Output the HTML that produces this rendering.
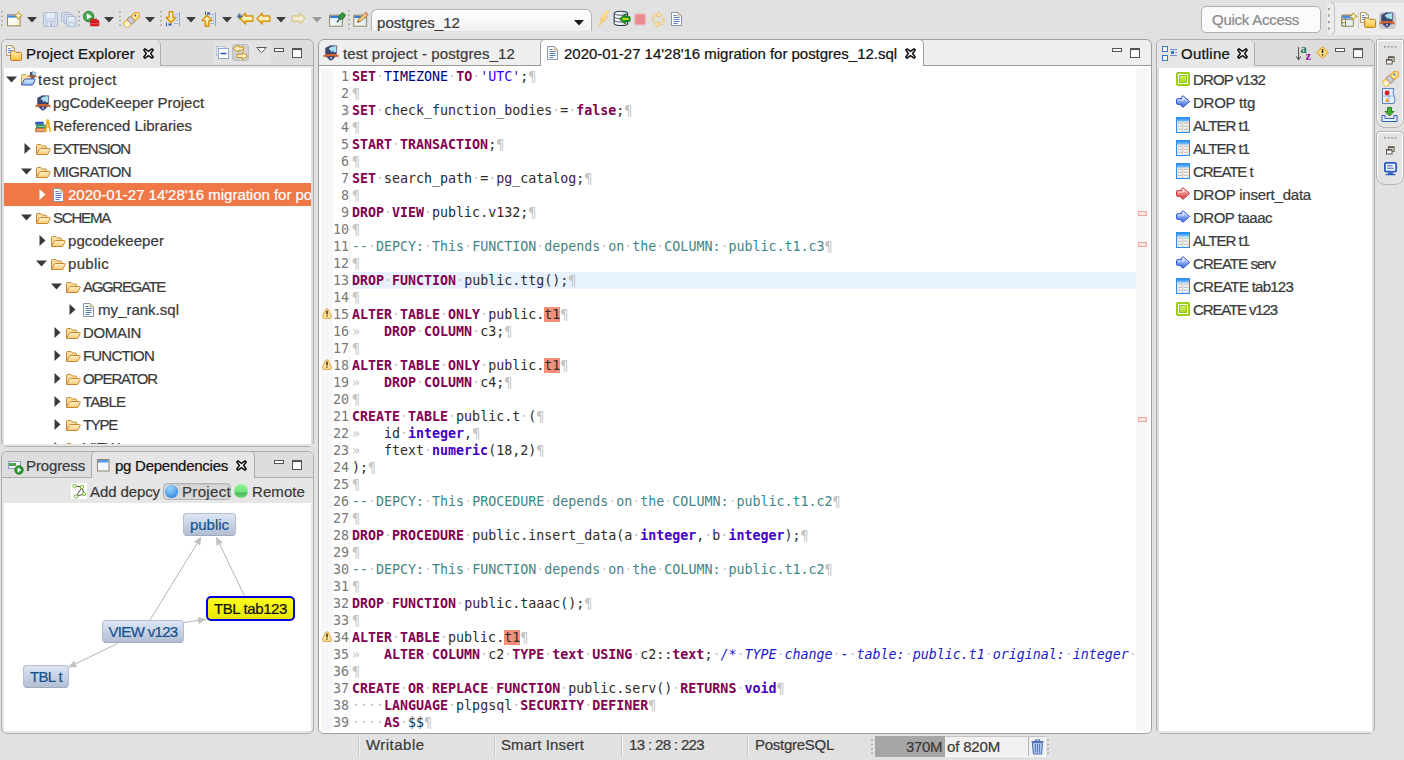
<!DOCTYPE html>
<html lang="en"><head><meta charset="utf-8"><title>Eclipse - pgCodeKeeper</title>
<style>
*{box-sizing:border-box;margin:0;padding:0}
html,body{width:1404px;height:760px;overflow:hidden;background:#e1e1e1}
body{position:relative;font-family:"Liberation Sans",sans-serif;font-size:15px;color:#333;}
.t{position:absolute;white-space:pre;line-height:20px;height:20px;font-size:15px;color:#3a3a3a;-webkit-text-stroke:0.22px currentColor}
.t.blk{color:#111}
.t.wht{color:#fff}
.panel{position:absolute;border:1px solid #a9a9a9;border-radius:12px 12px 9px 9px;background:#e6e6e6;overflow:hidden}
.white{position:absolute;background:#fff}
.code{position:absolute;left:352px;white-space:pre;font-family:"DejaVu Sans Mono","Liberation Mono",monospace;font-size:13.33px;letter-spacing:-0.018px;line-height:17px;height:17px;color:#2c2c2c}
.ln{position:absolute;left:318px;width:31px;text-align:right;white-space:pre;font-family:"DejaVu Sans Mono","Liberation Mono",monospace;font-size:13.33px;letter-spacing:-0.018px;line-height:17px;height:17px;color:#787878}
.k{color:#7f0055;font-weight:bold}
.ty{color:#4000c8;font-weight:bold}
.nv{color:#000080}
.s{color:#2a00ff}
.c{color:#3d878b}
.mc{color:#1a1ad2;font-style:italic}
.w{color:#c4c4c4}
.wc{color:#bcd4d8}
.wm{color:#c4c4ee}
.hl{background:#f5907a}
</style></head>
<body>
<svg width="0" height="0" style="position:absolute"><defs><linearGradient id="ga" x1="0" y1="0" x2="0" y2="1"><stop offset="0" stop-color="#fffdf0"/><stop offset="0.5" stop-color="#fff2b8"/><stop offset="1" stop-color="#fbd45a"/></linearGradient><linearGradient id="gf" x1="0" y1="0" x2="0" y2="1"><stop offset="0" stop-color="#fff2cc"/><stop offset="1" stop-color="#f5cb74"/></linearGradient><linearGradient id="gpf" x1="0" y1="0" x2="0" y2="1"><stop offset="0" stop-color="#d8ecff"/><stop offset="1" stop-color="#8cc0f4"/></linearGradient><linearGradient id="gv" x1="0" y1="0" x2="0" y2="1"><stop offset="0" stop-color="#d4f07a"/><stop offset="1" stop-color="#a6d620"/></linearGradient><linearGradient id="gb2" x1="0" y1="0" x2="0" y2="1"><stop offset="0" stop-color="#dce8ff"/><stop offset="0.45" stop-color="#8fb0f8"/><stop offset="1" stop-color="#3c5fdc"/></linearGradient><linearGradient id="gr" x1="0" y1="0" x2="0" y2="1"><stop offset="0" stop-color="#ffe0e0"/><stop offset="0.45" stop-color="#f08888"/><stop offset="1" stop-color="#d04040"/></linearGradient><linearGradient id="gt" x1="0" y1="0" x2="0" y2="1"><stop offset="0" stop-color="#2a8cf0"/><stop offset="1" stop-color="#8cc8ff"/></linearGradient><linearGradient id="gfo" x1="0" y1="0" x2="0" y2="1"><stop offset="0" stop-color="#ffeeb0"/><stop offset="1" stop-color="#f9c03a"/></linearGradient><linearGradient id="gw" x1="1" y1="0" x2="0" y2="1"><stop offset="0" stop-color="#c4e2fa"/><stop offset="1" stop-color="#ffffff"/></linearGradient><linearGradient id="gn" x1="0" y1="0" x2="1" y2="1"><stop offset="0" stop-color="#ffffff"/><stop offset="0.6" stop-color="#fffdf0"/><stop offset="1" stop-color="#fae9a8"/></linearGradient><linearGradient id="gl" x1="0" y1="0" x2="0" y2="1"><stop offset="0" stop-color="#fde9a0"/><stop offset="1" stop-color="#f8c868"/></linearGradient><linearGradient id="gdb" x1="0" y1="0" x2="1" y2="0"><stop offset="0" stop-color="#ffffff"/><stop offset="0.6" stop-color="#e8ecf0"/><stop offset="1" stop-color="#aab4c0"/></linearGradient><linearGradient id="gpt" x1="0" y1="0" x2="0" y2="1"><stop offset="0" stop-color="#fbd850"/><stop offset="0.55" stop-color="#fffef4"/><stop offset="1" stop-color="#fde890"/></linearGradient><linearGradient id="gpn" x1="0" y1="0" x2="0" y2="1"><stop offset="0" stop-color="#f9c040"/><stop offset="0.5" stop-color="#fff0a8"/><stop offset="1" stop-color="#f8c848"/></linearGradient><radialGradient id="grun" cx="0.45" cy="0.4" r="0.7"><stop offset="0" stop-color="#6ab86a"/><stop offset="1" stop-color="#2f8f36"/></radialGradient></defs></svg>
<div style="position:absolute;left:1327px;top:3px;width:77px;height:32px;background:#ececec"></div>
<svg style="position:absolute;left:1px;top:11px" width="3" height="22" viewBox="0 0 3 22"><rect x="1" y="1.0" width="1.4" height="1.4" fill="#f4f4f4"/><rect x="0.2" y="0.2" width="1.7" height="1.7" fill="#aca695"/><rect x="1" y="5.4" width="1.4" height="1.4" fill="#f4f4f4"/><rect x="0.2" y="4.6" width="1.7" height="1.7" fill="#aca695"/><rect x="1" y="9.8" width="1.4" height="1.4" fill="#f4f4f4"/><rect x="0.2" y="9.0" width="1.7" height="1.7" fill="#aca695"/><rect x="1" y="14.2" width="1.4" height="1.4" fill="#f4f4f4"/><rect x="0.2" y="13.4" width="1.7" height="1.7" fill="#aca695"/></svg><svg style="position:absolute;left:6px;top:11px" width="17" height="16" viewBox="0 0 17 16"><rect x="1.5" y="3.8" width="12.6" height="11" fill="url(#gn)" stroke="#9a8c68" stroke-width="1.1"/><rect x="2.1" y="4.4" width="11.4" height="2.2" fill="#3a86dc"/><path d="M12.4 0.6L13.6 3.4L16.4 4.6L13.6 5.8L12.4 8.6L11.2 5.8L8.4 4.6L11.2 3.4Z" fill="#fffbe0" stroke="#c9a020" stroke-width="1" stroke-linejoin="round"/></svg><svg style="position:absolute;left:27px;top:17px" width="10" height="6" viewBox="0 0 10 6"><path d="M0 0H10L5 5.5Z" fill="#3c3c3c"/></svg><svg style="position:absolute;left:43px;top:12px" width="15" height="15" viewBox="0 0 15 15"><path d="M0.5 1.5Q0.5 0.5 1.5 0.5H13.5Q14.5 0.5 14.5 1.5V13.5Q14.5 14.5 13.5 14.5H1.5Q0.5 14.5 0.5 13.5Z" fill="#d3dceb" stroke="#a9b8d4"/><rect x="3" y="0.8" width="9" height="6" fill="#e9eef6" stroke="#b7c4db" stroke-width="0.6"/><rect x="4" y="9.5" width="7" height="5" fill="#e3e9f3" stroke="#a9b8d4" stroke-width="0.7"/><rect x="7.5" y="11" width="1.5" height="3" fill="#93a4c4"/></svg><svg style="position:absolute;left:61px;top:12px" width="16" height="15" viewBox="0 0 16 15"><rect x="0.5" y="0.5" width="9" height="9" rx="1" fill="#d8e0ed" stroke="#a9b8d4"/><rect x="3" y="2.5" width="9" height="9" rx="1" fill="#d8e0ed" stroke="#a9b8d4"/><rect x="5.5" y="4.5" width="9.5" height="10" rx="1" fill="#d3dceb" stroke="#a9b8d4"/><rect x="7.5" y="5" width="5.5" height="3.5" fill="#e9eef6"/><rect x="8" y="11" width="5" height="3.5" fill="#e3e9f3" stroke="#a9b8d4" stroke-width="0.6"/></svg><svg style="position:absolute;left:78px;top:11px" width="3" height="22" viewBox="0 0 3 22"><rect x="1" y="1.0" width="1.4" height="1.4" fill="#f4f4f4"/><rect x="0.2" y="0.2" width="1.7" height="1.7" fill="#aca695"/><rect x="1" y="5.4" width="1.4" height="1.4" fill="#f4f4f4"/><rect x="0.2" y="4.6" width="1.7" height="1.7" fill="#aca695"/><rect x="1" y="9.8" width="1.4" height="1.4" fill="#f4f4f4"/><rect x="0.2" y="9.0" width="1.7" height="1.7" fill="#aca695"/><rect x="1" y="14.2" width="1.4" height="1.4" fill="#f4f4f4"/><rect x="0.2" y="13.4" width="1.7" height="1.7" fill="#aca695"/></svg><svg style="position:absolute;left:82px;top:10px" width="18" height="17" viewBox="0 0 18 17"><circle cx="6.6" cy="6.5" r="5.2" fill="url(#grun)" stroke="#2a8030" stroke-width="0.9"/><path d="M4.9 3.6L9.8 6.5L4.9 9.4Z" fill="#fff"/><path d="M10.4 10.4V9.4H14.6V10.4" fill="none" stroke="#d01818" stroke-width="1.1"/><rect x="8.3" y="10.3" width="8.6" height="5.6" rx="0.9" fill="#e62228" stroke="#c01418" stroke-width="0.7"/><path d="M8.6 12.6H16.6" stroke="#8a0a0e" stroke-width="0.7"/><path d="M8.6 13.4H16.6" stroke="#ff8a8a" stroke-width="0.5"/></svg><svg style="position:absolute;left:104px;top:17px" width="10" height="6" viewBox="0 0 10 6"><path d="M0 0H10L5 5.5Z" fill="#3c3c3c"/></svg><svg style="position:absolute;left:119px;top:11px" width="3" height="22" viewBox="0 0 3 22"><rect x="1" y="1.0" width="1.4" height="1.4" fill="#f4f4f4"/><rect x="0.2" y="0.2" width="1.7" height="1.7" fill="#aca695"/><rect x="1" y="5.4" width="1.4" height="1.4" fill="#f4f4f4"/><rect x="0.2" y="4.6" width="1.7" height="1.7" fill="#aca695"/><rect x="1" y="9.8" width="1.4" height="1.4" fill="#f4f4f4"/><rect x="0.2" y="9.0" width="1.7" height="1.7" fill="#aca695"/><rect x="1" y="14.2" width="1.4" height="1.4" fill="#f4f4f4"/><rect x="0.2" y="13.4" width="1.7" height="1.7" fill="#aca695"/></svg><svg style="position:absolute;left:123px;top:11px" width="18" height="17" viewBox="0 0 18 17"><g transform="translate(9,8.4) rotate(-42) scale(0.92)"><path d="M-10.4 -2.6Q-10.4 -3.5 -9.4 -3.5H-3.5V3.5H-9.4Q-10.4 3.5 -10.4 2.6Z" fill="url(#gpt)" stroke="#e2a228" stroke-width="0.8"/><path d="M1 -3.6H7.4L10.6 0L7.4 3.6H1Z" fill="url(#gpn)" stroke="#e8982a" stroke-width="0.9" stroke-linejoin="round"/><rect x="-4.2" y="-4" width="5.4" height="8" rx="1.8" fill="#cdc6d6" stroke="#9a7c4c" stroke-width="0.9"/><circle cx="5.6" cy="-0.6" r="1" fill="#2a50b0"/></g></svg><svg style="position:absolute;left:145px;top:17px" width="10" height="6" viewBox="0 0 10 6"><path d="M0 0H10L5 5.5Z" fill="#3c3c3c"/></svg><svg style="position:absolute;left:160px;top:11px" width="3" height="22" viewBox="0 0 3 22"><rect x="1" y="1.0" width="1.4" height="1.4" fill="#f4f4f4"/><rect x="0.2" y="0.2" width="1.7" height="1.7" fill="#aca695"/><rect x="1" y="5.4" width="1.4" height="1.4" fill="#f4f4f4"/><rect x="0.2" y="4.6" width="1.7" height="1.7" fill="#aca695"/><rect x="1" y="9.8" width="1.4" height="1.4" fill="#f4f4f4"/><rect x="0.2" y="9.0" width="1.7" height="1.7" fill="#aca695"/><rect x="1" y="14.2" width="1.4" height="1.4" fill="#f4f4f4"/><rect x="0.2" y="13.4" width="1.7" height="1.7" fill="#aca695"/></svg><svg style="position:absolute;left:165px;top:11px" width="17" height="16" viewBox="0 0 17 16"><path d="M4.2 0.8H7.8V6.4H11L6 11.8L1 6.4H4.2Z" fill="url(#ga)" stroke="#d2940e" stroke-width="1.4" stroke-linejoin="round"/><path d="M1.5 11.5V15.5" stroke="#3a5fae" stroke-width="1"/><rect x="3.5" y="12.5" width="3" height="2" fill="#2d56b0"/><path d="M10 3.5H13M10 6.5H13M11 9.5H13M9 12.5H13" stroke="#9db5dd" stroke-width="1"/><path d="M14.5 1V15" stroke="#8aa3d0" stroke-width="1"/></svg><svg style="position:absolute;left:186px;top:17px" width="10" height="6" viewBox="0 0 10 6"><path d="M0 0H10L5 5.5Z" fill="#3c3c3c"/></svg><svg style="position:absolute;left:201px;top:11px" width="17" height="16" viewBox="0 0 17 16"><path d="M4.2 15.2H7.8V9.6H11L6 4.2L1 9.6H4.2Z" fill="url(#ga)" stroke="#d2940e" stroke-width="1.4" stroke-linejoin="round"/><path d="M4.5 0.5V4" stroke="#3a5fae" stroke-width="1"/><rect x="6" y="1.5" width="3" height="2" fill="#2d56b0"/><path d="M10 3.5H13M10 6.5H13M11 9.5H13M9 12.5H13" stroke="#9db5dd" stroke-width="1"/><path d="M14.5 1V15" stroke="#8aa3d0" stroke-width="1"/></svg><svg style="position:absolute;left:222px;top:17px" width="10" height="6" viewBox="0 0 10 6"><path d="M0 0H10L5 5.5Z" fill="#3c3c3c"/></svg><svg style="position:absolute;left:236px;top:11px" width="18" height="16" viewBox="0 0 18 16"><path d="M9.5 2.2L4.2 7.6L9.5 13V10.2H16.8V5H9.5Z" fill="url(#ga)" stroke="#d2940e" stroke-width="1.4" stroke-linejoin="round"/><path d="M1.6 3.3L5.6 7.3M5.6 3.3L1.6 7.3M3.6 2.4V8.2M0.8 5.3H6.4" stroke="#3a5a9a" stroke-width="0.9"/></svg><svg style="position:absolute;left:256px;top:12px" width="15" height="14" viewBox="0 0 15 14"><path d="M6.3 1.2L1 6.6L6.3 12V9.2H13.8V4H6.3Z" fill="url(#ga)" stroke="#d2940e" stroke-width="1.4" stroke-linejoin="round"/></svg><svg style="position:absolute;left:276px;top:17px" width="10" height="6" viewBox="0 0 10 6"><path d="M0 0H10L5 5.5Z" fill="#3c3c3c"/></svg><svg style="position:absolute;left:291px;top:12px" width="15" height="14" viewBox="0 0 15 14"><path d="M8.7 1.2L14 6.6L8.7 12V9.2H1.2V4H8.7Z" fill="#f5eed6" stroke="#dcc88e" stroke-width="1.4" stroke-linejoin="round"/></svg><svg style="position:absolute;left:312px;top:17px" width="10" height="6" viewBox="0 0 10 6"><path d="M0 0H10L5 5.5Z" fill="#9c9a96"/></svg><svg style="position:absolute;left:329px;top:11px" width="17" height="16" viewBox="0 0 17 16"><rect x="0.6" y="4.2" width="12.8" height="11" fill="url(#gw)" stroke="#9a8c68" stroke-width="1.1"/><rect x="1.2" y="4.8" width="11.6" height="2.2" fill="#3a7ad0"/><path d="M9.6 7.4L10.4 4.2L13.6 1.6L16.4 3.8L14.6 7.4L11.6 8.6Z" fill="#2f9a3a" stroke="#1c6a24" stroke-width="0.8" stroke-linejoin="round"/><path d="M10.4 8.2L8 11.4" stroke="#333" stroke-width="1.2"/></svg><svg style="position:absolute;left:348px;top:10px" width="3" height="22" viewBox="0 0 3 22"><rect x="1" y="1.0" width="1.4" height="1.4" fill="#f4f4f4"/><rect x="0.2" y="0.2" width="1.7" height="1.7" fill="#aca695"/><rect x="1" y="5.4" width="1.4" height="1.4" fill="#f4f4f4"/><rect x="0.2" y="4.6" width="1.7" height="1.7" fill="#aca695"/><rect x="1" y="9.8" width="1.4" height="1.4" fill="#f4f4f4"/><rect x="0.2" y="9.0" width="1.7" height="1.7" fill="#aca695"/><rect x="1" y="14.2" width="1.4" height="1.4" fill="#f4f4f4"/><rect x="0.2" y="13.4" width="1.7" height="1.7" fill="#aca695"/><rect x="1" y="18.6" width="1.4" height="1.4" fill="#f4f4f4"/><rect x="0.2" y="17.8" width="1.7" height="1.7" fill="#aca695"/></svg><svg style="position:absolute;left:353px;top:11px" width="17" height="16" viewBox="0 0 17 16"><rect x="0.8" y="4.2" width="12.8" height="11" fill="url(#gw)" stroke="#9a8c68" stroke-width="1.1"/><rect x="1.4" y="4.8" width="11.6" height="2.2" fill="#3a7ad0"/><path d="M4.6 11.4L5.6 8.2L12.8 1.2L15.2 3.4L7.8 10.4Z" fill="#f6c878" stroke="#b8782a" stroke-width="0.9" stroke-linejoin="round"/><path d="M12.2 1.8L14.6 4" stroke="#e88a8a" stroke-width="1.8"/><path d="M4.6 11.4L5.2 9.6L6.4 10.8Z" fill="#333"/></svg><svg style="position:absolute;left:597px;top:10px" width="14" height="18" viewBox="0 0 14 18"><path d="M8.2 1.2L12.6 0.8L7.6 7.6L10.6 7.2L1.4 17L5.2 9.6L2.6 10Z" fill="url(#gl)" stroke="#f0c060" stroke-width="0.6" stroke-linejoin="round"/></svg><svg style="position:absolute;left:613px;top:10px" width="18" height="17" viewBox="0 0 18 17"><path d="M1.2 3.4C1.2 0.6 14.6 0.6 14.6 3.4V13.4C14.6 16.2 1.2 16.2 1.2 13.4Z" fill="url(#gdb)" stroke="#2c3a50" stroke-width="1.1"/><path d="M1.2 3.4C1.2 5.8 14.6 5.8 14.6 3.4M1.2 6.8C1.2 9.2 14.6 9.2 14.6 6.8M1.2 10.2C1.2 12.6 14.6 12.6 14.6 10.2" fill="none" stroke="#3c4a60" stroke-width="0.9"/><path d="M12.2 4.2L6.6 9L12.2 13.8V11.2H17V6.8H12.2Z" fill="#22a022" stroke="#0e6a12" stroke-width="0.9" stroke-linejoin="round"/><path d="M11 7.8L9 9L11 10.2V9.8H15.6V8.2H11Z" fill="#e8f020"/></svg><svg style="position:absolute;left:634px;top:13px" width="12" height="13" viewBox="0 0 12 13"><rect x="1" y="1.2" width="10.2" height="10.4" rx="1.6" fill="#ec8a92" stroke="#f0a8ae" stroke-width="1.4"/></svg><svg style="position:absolute;left:650px;top:11px" width="16" height="17" viewBox="0 0 16 17"><path d="M2.2 9.6C0.6 5.6 3.8 2.2 7.8 3L8.4 0.8L12.4 4.6L7.2 6.4L7.6 4.6C5.2 4.4 3.2 6.4 4.2 9.2Z" fill="#f6e2b0" stroke="#e2c27a" stroke-width="0.8" stroke-linejoin="round"/><path d="M13.8 7.4C15.4 11.4 12.2 14.8 8.2 14L7.6 16.2L3.6 12.4L8.8 10.6L8.4 12.4C10.8 12.6 12.8 10.6 11.8 7.8Z" fill="#f6e2b0" stroke="#e2c27a" stroke-width="0.8" stroke-linejoin="round"/></svg><svg style="position:absolute;left:671px;top:12px" width="11" height="14" viewBox="0 0 11 14"><path d="M0.5 0.5H7L10.5 4V13.5H0.5Z" fill="#fcfdff" stroke="#8794ad"/><path d="M7 0.5V4H10.5Z" fill="#f3e6b4" stroke="#b9a97a" stroke-width="0.8" stroke-linejoin="round"/><path d="M2.5 3.5H5.5M2.5 5.5H8.5M2.5 7.5H8.5M2.5 9.5H8.5M2.5 11.5H6.5" stroke="#5878b8" stroke-width="1"/></svg><svg style="position:absolute;left:1328px;top:8px" width="3" height="24" viewBox="0 0 3 24"><rect x="1" y="1.0" width="1.6" height="1.8" fill="#f8f8f8"/><rect x="0" y="0.0" width="2" height="2.2" fill="#a59f8e"/><rect x="1" y="7.5" width="1.6" height="1.8" fill="#f8f8f8"/><rect x="0" y="6.5" width="2" height="2.2" fill="#a59f8e"/><rect x="1" y="14.0" width="1.6" height="1.8" fill="#f8f8f8"/><rect x="0" y="13.0" width="2" height="2.2" fill="#a59f8e"/><rect x="1" y="20.5" width="1.6" height="1.8" fill="#f8f8f8"/><rect x="0" y="19.5" width="2" height="2.2" fill="#a59f8e"/></svg><svg style="position:absolute;left:1331px;top:2px" width="5" height="34" viewBox="0 0 5 34"><path d="M0 0.5Q3.5 0.5 3.5 4V29Q3.5 32.5 0 32.5" fill="none" stroke="#c2c2c2"/></svg><svg style="position:absolute;left:1341px;top:12px" width="17" height="16" viewBox="0 0 17 16"><rect x="0.8" y="3.2" width="11.4" height="11" rx="1" fill="#f4faff" stroke="#8f7d4a" stroke-width="1.2"/><path d="M0.8 7.2H12.2M4.6 3.2V14.2M0.8 10.8H4.6" stroke="#8f7d4a" stroke-width="1.1"/><rect x="1.4" y="3.8" width="10.2" height="2.6" fill="#4a8adc"/><path d="M5.4 8H11.6V13.6H5.4Z" fill="#e2f0fc"/><path d="M12.4 0.6L13.6 3.2L16.2 4.4L13.6 5.6L12.4 8.2L11.2 5.6L8.6 4.4L11.2 3.2Z" fill="#fffbe0" stroke="#c49a1e" stroke-width="1"/></svg><svg style="position:absolute;left:1358px;top:11px" width="1" height="18" viewBox="0 0 1 18"><path d="M0.5 0V18" stroke="#d6d6d6"/></svg><svg style="position:absolute;left:1360px;top:12px" width="17" height="16" viewBox="0 0 17 16"><path d="M0.6 0.6H6L8.4 3V10.4H0.6Z" fill="#fdfdfd" stroke="#a89868" stroke-width="1"/><path d="M6 0.6V3H8.4" fill="#e8d8a0" stroke="#a89868" stroke-width="0.8"/><path d="M2 3.5H4.5M2 5.5H6.5M2 7.5H5" stroke="#5a82d8" stroke-width="1"/><path d="M4.6 14.4V7Q4.6 6 5.6 6H8.2Q8.8 6 9.2 6.6L9.8 7.4H14.6Q15.6 7.4 15.6 8.4V14.4Q15.6 15.4 14.6 15.4H5.6Q4.6 15.4 4.6 14.4Z" fill="url(#gfo)" stroke="#c07a1e" stroke-width="1"/></svg><div style="position:absolute;left:1379px;top:12px;width:17px;height:17px;background:#c9c9ce;border-radius:4px"></div><svg style="position:absolute;left:1379px;top:12px" width="17" height="16" viewBox="0 0 17 16"><path d="M2.4 3L7.5 0.4L13.8 0.7L13.4 9.7C12.5 12.5 9.5 14.5 7.9 15.6C6.3 14.5 3.2 12.5 2.4 9.7Z" fill="#3b4670" stroke="#59648a" stroke-width="0.5"/><path d="M5.6 4.2C6.6 1.8 9 1 13.2 1.2L13 7L10.8 7.6L10 5.4L8.4 7.2L7.2 4.8Z" fill="#a6e2f0"/><path d="M0.2 10.2C4 8.5 12 8.5 15.8 10.2L15.2 11.2L15.8 12.4C12 10.8 4 10.8 0.2 12.4L0.8 11.2Z" fill="#d4622c"/><path d="M7.2 12.2H8.8V13.8H7.2Z" fill="#dfe6f2"/></svg>
<div style="position:absolute;left:371px;top:9px;width:221px;height:22px;border:1px solid #b4b4b4;border-bottom:none;border-radius:6px 6px 0 0;background:linear-gradient(#fff,#f1f1f1)"></div>
<span class="t" style="left:377px;top:13px;letter-spacing:0.040px;">postgres_12</span>
<svg style="position:absolute;left:574px;top:20px" width="11" height="6" viewBox="0 0 11 6"><path d="M0 0H10L5 5.5Z" fill="#1a1a1a"/></svg>
<div style="position:absolute;left:1201px;top:6px;width:120px;height:27px;border:1px solid #b0b0b0;border-radius:5px;background:#fbfbfb"></div>
<span class="t" style="left:1212px;top:10px;letter-spacing:-0.252px;color:#8a8a8a;">Quick Access</span>
<div style="position:absolute;left:1px;top:39px;width:313px;height:408px;border:1px solid #aeaeae;border-radius:6px;background:#dddddd"></div>
<div style="position:absolute;left:2px;top:65px;width:311px;height:1px;background:#aeaeae"></div>
<div style="position:absolute;left:2px;top:66px;width:311px;height:2px;background:linear-gradient(#e6e6e6,#ececec)"></div>
<div style="position:absolute;left:4px;top:68px;width:307px;height:376px;background:#fff;overflow:hidden"><svg style="position:absolute;left:2px;top:8px" width="11" height="7" viewBox="0 0 11 7"><path d="M0 0.5H11L5.5 6.5Z" fill="#3a3a3a"/></svg><svg style="position:absolute;left:16px;top:3px" width="17" height="16" viewBox="0 0 17 16"><path d="M1.5 13V4.6Q1.5 3.5 2.6 3.5H5.4Q6.3 3.5 6.8 4.3L7.3 5H10.5Q11.5 5 11.5 6V8" fill="#fbe2a2" stroke="#c9a05a" stroke-width="1"/><path d="M1.5 14L4.2 8.7Q4.6 8 5.4 8H14.4Q15.6 8 15.1 9.1L13 13.5Q12.7 14 12 14Z" fill="url(#gpf)" stroke="#3a4eb4" stroke-width="1" stroke-linejoin="round"/><path d="M10 1.2L12.7 0.4L15.4 1.2L15.6 4.6C15.2 6.6 13.6 7.6 12.7 8C11.8 7.6 10.2 6.6 9.8 4.6Z" fill="#4a5478"/><path d="M12.4 1.4C13 0.8 14.8 0.9 15 1.8V4L12.9 4.5C13 3.4 11.8 2.6 12.4 1.4Z" fill="#a9e3f1"/><path d="M8.4 4.9C10.5 4.2 14.9 4.2 17 4.9L16.6 6.3C14.6 5.7 10.8 5.7 8.8 6.3Z" fill="#d9622b"/></svg><span class="t" style="left:34px;top:2px;letter-spacing:0.470px;">test project</span><svg style="position:absolute;left:31px;top:27px" width="17" height="16" viewBox="0 0 17 16"><path d="M2.4 3L7.5 0.4L13.8 0.7L13.4 9.7C12.5 12.5 9.5 14.5 7.9 15.6C6.3 14.5 3.2 12.5 2.4 9.7Z" fill="#3b4670" stroke="#59648a" stroke-width="0.5"/><path d="M5.6 4.2C6.6 1.8 9 1 13.2 1.2L13 7L10.8 7.6L10 5.4L8.4 7.2L7.2 4.8Z" fill="#a6e2f0"/><path d="M0.2 10.2C4 8.5 12 8.5 15.8 10.2L15.2 11.2L15.8 12.4C12 10.8 4 10.8 0.2 12.4L0.8 11.2Z" fill="#d4622c"/><path d="M7.2 12.2H8.8V13.8H7.2Z" fill="#dfe6f2"/></svg><span class="t" style="left:49px;top:25px;letter-spacing:-0.038px;">pgCodeKeeper Project</span><svg style="position:absolute;left:31px;top:50px" width="16" height="16" viewBox="0 0 16 16"><rect x="0.5" y="4" width="8" height="2.6" rx="0.5" fill="#2a62c0" stroke="#1f4a9a" stroke-width="0.5"/><rect x="1.5" y="7" width="9.5" height="3" rx="0.5" fill="#3a9a62" stroke="#1f7a48" stroke-width="0.6"/><path d="M3 8.5H10" stroke="#9fdcb8" stroke-width="0.8"/><rect x="0.5" y="10.4" width="10.5" height="3.4" rx="0.5" fill="#e08a50" stroke="#b85a22" stroke-width="0.7"/><path d="M2 12H10" stroke="#f8c8a0" stroke-width="0.8"/><path d="M10.6 13.8L12.2 2.6Q12.5 1 13.2 2.6L15.4 13.8" fill="none" stroke="#eeb21e" stroke-width="1.8" stroke-linejoin="round"/><path d="M11.6 9H14.4M12 5.8H13.8" stroke="#c98a10" stroke-width="0.8"/></svg><span class="t" style="left:49px;top:48px;letter-spacing:-0.012px;">Referenced Libraries</span><svg style="position:absolute;left:20px;top:75px" width="7" height="11" viewBox="0 0 7 11"><path d="M0.5 0L6.5 5.5L0.5 11Z" fill="#3a3a3a"/></svg><svg style="position:absolute;left:31px;top:73px" width="16" height="16" viewBox="0 0 16 16"><path d="M1.5 13V4.6Q1.5 3.5 2.6 3.5H5.4Q6.3 3.5 6.8 4.3L7.3 5H10.5Q11.5 5 11.5 6V7.5" fill="#fadf9e" stroke="#c8872e" stroke-width="1"/><path d="M1.5 13.5L4.2 8.2Q4.6 7.5 5.4 7.5H14.4Q15.6 7.5 15.1 8.6L13 13Q12.7 13.5 12 13.5Z" fill="url(#gf)" stroke="#c8872e" stroke-width="1" stroke-linejoin="round"/></svg><span class="t" style="left:49px;top:71px;letter-spacing:-1.076px;">EXTENSION</span><svg style="position:absolute;left:17px;top:100px" width="11" height="7" viewBox="0 0 11 7"><path d="M0 0.5H11L5.5 6.5Z" fill="#3a3a3a"/></svg><svg style="position:absolute;left:31px;top:96px" width="16" height="16" viewBox="0 0 16 16"><path d="M1.5 13V4.6Q1.5 3.5 2.6 3.5H5.4Q6.3 3.5 6.8 4.3L7.3 5H10.5Q11.5 5 11.5 6V7.5" fill="#fadf9e" stroke="#c8872e" stroke-width="1"/><path d="M1.5 13.5L4.2 8.2Q4.6 7.5 5.4 7.5H14.4Q15.6 7.5 15.1 8.6L13 13Q12.7 13.5 12 13.5Z" fill="url(#gf)" stroke="#c8872e" stroke-width="1" stroke-linejoin="round"/></svg><span class="t" style="left:49px;top:94px;letter-spacing:-0.654px;">MIGRATION</span><div style="position:absolute;left:0px;top:115px;width:308px;height:23px;background:#f07746"></div><svg style="position:absolute;left:35px;top:121px" width="7" height="11" viewBox="0 0 7 11"><path d="M0.5 0L6.5 5.5L0.5 11Z" fill="#fff"/></svg><svg style="position:absolute;left:49px;top:120px" width="11" height="14" viewBox="0 0 11 14"><path d="M0.5 0.5H7L10.5 4V13.5H0.5Z" fill="#fcfdff" stroke="#8794ad"/><path d="M7 0.5V4H10.5Z" fill="#f3e6b4" stroke="#b9a97a" stroke-width="0.8" stroke-linejoin="round"/><path d="M2.5 3.5H5.5M2.5 5.5H8.5M2.5 7.5H8.5M2.5 9.5H8.5M2.5 11.5H6.5" stroke="#5878b8" stroke-width="1"/></svg><span class="t wht" style="left:64px;top:117px;letter-spacing:-0.026px;">2020-01-27 14'28'16 migration for postgres_12.sql</span><svg style="position:absolute;left:17px;top:146px" width="11" height="7" viewBox="0 0 11 7"><path d="M0 0.5H11L5.5 6.5Z" fill="#3a3a3a"/></svg><svg style="position:absolute;left:31px;top:142px" width="16" height="16" viewBox="0 0 16 16"><path d="M1.5 13V4.6Q1.5 3.5 2.6 3.5H5.4Q6.3 3.5 6.8 4.3L7.3 5H10.5Q11.5 5 11.5 6V7.5" fill="#fadf9e" stroke="#c8872e" stroke-width="1"/><path d="M1.5 13.5L4.2 8.2Q4.6 7.5 5.4 7.5H14.4Q15.6 7.5 15.1 8.6L13 13Q12.7 13.5 12 13.5Z" fill="url(#gf)" stroke="#c8872e" stroke-width="1" stroke-linejoin="round"/></svg><span class="t" style="left:49px;top:140px;letter-spacing:-1.196px;">SCHEMA</span><svg style="position:absolute;left:35px;top:167px" width="7" height="11" viewBox="0 0 7 11"><path d="M0.5 0L6.5 5.5L0.5 11Z" fill="#3a3a3a"/></svg><svg style="position:absolute;left:46px;top:165px" width="16" height="16" viewBox="0 0 16 16"><path d="M1.5 13V4.6Q1.5 3.5 2.6 3.5H5.4Q6.3 3.5 6.8 4.3L7.3 5H10.5Q11.5 5 11.5 6V7.5" fill="#fadf9e" stroke="#c8872e" stroke-width="1"/><path d="M1.5 13.5L4.2 8.2Q4.6 7.5 5.4 7.5H14.4Q15.6 7.5 15.1 8.6L13 13Q12.7 13.5 12 13.5Z" fill="url(#gf)" stroke="#c8872e" stroke-width="1" stroke-linejoin="round"/></svg><span class="t" style="left:64px;top:163px;letter-spacing:0.077px;">pgcodekeeper</span><svg style="position:absolute;left:32px;top:192px" width="11" height="7" viewBox="0 0 11 7"><path d="M0 0.5H11L5.5 6.5Z" fill="#3a3a3a"/></svg><svg style="position:absolute;left:46px;top:188px" width="16" height="16" viewBox="0 0 16 16"><path d="M1.5 13V4.6Q1.5 3.5 2.6 3.5H5.4Q6.3 3.5 6.8 4.3L7.3 5H10.5Q11.5 5 11.5 6V7.5" fill="#fadf9e" stroke="#c8872e" stroke-width="1"/><path d="M1.5 13.5L4.2 8.2Q4.6 7.5 5.4 7.5H14.4Q15.6 7.5 15.1 8.6L13 13Q12.7 13.5 12 13.5Z" fill="url(#gf)" stroke="#c8872e" stroke-width="1" stroke-linejoin="round"/></svg><span class="t" style="left:64px;top:186px;letter-spacing:0.301px;">public</span><svg style="position:absolute;left:47px;top:215px" width="11" height="7" viewBox="0 0 11 7"><path d="M0 0.5H11L5.5 6.5Z" fill="#3a3a3a"/></svg><svg style="position:absolute;left:61px;top:211px" width="16" height="16" viewBox="0 0 16 16"><path d="M1.5 13V4.6Q1.5 3.5 2.6 3.5H5.4Q6.3 3.5 6.8 4.3L7.3 5H10.5Q11.5 5 11.5 6V7.5" fill="#fadf9e" stroke="#c8872e" stroke-width="1"/><path d="M1.5 13.5L4.2 8.2Q4.6 7.5 5.4 7.5H14.4Q15.6 7.5 15.1 8.6L13 13Q12.7 13.5 12 13.5Z" fill="url(#gf)" stroke="#c8872e" stroke-width="1" stroke-linejoin="round"/></svg><span class="t" style="left:79px;top:209px;letter-spacing:-1.323px;">AGGREGATE</span><svg style="position:absolute;left:65px;top:236px" width="7" height="11" viewBox="0 0 7 11"><path d="M0.5 0L6.5 5.5L0.5 11Z" fill="#3a3a3a"/></svg><svg style="position:absolute;left:79px;top:235px" width="11" height="14" viewBox="0 0 11 14"><path d="M0.5 0.5H7L10.5 4V13.5H0.5Z" fill="#fcfdff" stroke="#8794ad"/><path d="M7 0.5V4H10.5Z" fill="#f3e6b4" stroke="#b9a97a" stroke-width="0.8" stroke-linejoin="round"/><path d="M2.5 3.5H5.5M2.5 5.5H8.5M2.5 7.5H8.5M2.5 9.5H8.5M2.5 11.5H6.5" stroke="#5878b8" stroke-width="1"/></svg><span class="t" style="left:94px;top:232px;letter-spacing:0.013px;">my_rank.sql</span><svg style="position:absolute;left:50px;top:259px" width="7" height="11" viewBox="0 0 7 11"><path d="M0.5 0L6.5 5.5L0.5 11Z" fill="#3a3a3a"/></svg><svg style="position:absolute;left:61px;top:257px" width="16" height="16" viewBox="0 0 16 16"><path d="M1.5 13V4.6Q1.5 3.5 2.6 3.5H5.4Q6.3 3.5 6.8 4.3L7.3 5H10.5Q11.5 5 11.5 6V7.5" fill="#fadf9e" stroke="#c8872e" stroke-width="1"/><path d="M1.5 13.5L4.2 8.2Q4.6 7.5 5.4 7.5H14.4Q15.6 7.5 15.1 8.6L13 13Q12.7 13.5 12 13.5Z" fill="url(#gf)" stroke="#c8872e" stroke-width="1" stroke-linejoin="round"/></svg><span class="t" style="left:79px;top:255px;letter-spacing:-0.333px;">DOMAIN</span><svg style="position:absolute;left:50px;top:282px" width="7" height="11" viewBox="0 0 7 11"><path d="M0.5 0L6.5 5.5L0.5 11Z" fill="#3a3a3a"/></svg><svg style="position:absolute;left:61px;top:280px" width="16" height="16" viewBox="0 0 16 16"><path d="M1.5 13V4.6Q1.5 3.5 2.6 3.5H5.4Q6.3 3.5 6.8 4.3L7.3 5H10.5Q11.5 5 11.5 6V7.5" fill="#fadf9e" stroke="#c8872e" stroke-width="1"/><path d="M1.5 13.5L4.2 8.2Q4.6 7.5 5.4 7.5H14.4Q15.6 7.5 15.1 8.6L13 13Q12.7 13.5 12 13.5Z" fill="url(#gf)" stroke="#c8872e" stroke-width="1" stroke-linejoin="round"/></svg><span class="t" style="left:79px;top:278px;letter-spacing:-0.811px;">FUNCTION</span><svg style="position:absolute;left:50px;top:305px" width="7" height="11" viewBox="0 0 7 11"><path d="M0.5 0L6.5 5.5L0.5 11Z" fill="#3a3a3a"/></svg><svg style="position:absolute;left:61px;top:303px" width="16" height="16" viewBox="0 0 16 16"><path d="M1.5 13V4.6Q1.5 3.5 2.6 3.5H5.4Q6.3 3.5 6.8 4.3L7.3 5H10.5Q11.5 5 11.5 6V7.5" fill="#fadf9e" stroke="#c8872e" stroke-width="1"/><path d="M1.5 13.5L4.2 8.2Q4.6 7.5 5.4 7.5H14.4Q15.6 7.5 15.1 8.6L13 13Q12.7 13.5 12 13.5Z" fill="url(#gf)" stroke="#c8872e" stroke-width="1" stroke-linejoin="round"/></svg><span class="t" style="left:79px;top:301px;letter-spacing:-1.099px;">OPERATOR</span><svg style="position:absolute;left:50px;top:328px" width="7" height="11" viewBox="0 0 7 11"><path d="M0.5 0L6.5 5.5L0.5 11Z" fill="#3a3a3a"/></svg><svg style="position:absolute;left:61px;top:326px" width="16" height="16" viewBox="0 0 16 16"><path d="M1.5 13V4.6Q1.5 3.5 2.6 3.5H5.4Q6.3 3.5 6.8 4.3L7.3 5H10.5Q11.5 5 11.5 6V7.5" fill="#fadf9e" stroke="#c8872e" stroke-width="1"/><path d="M1.5 13.5L4.2 8.2Q4.6 7.5 5.4 7.5H14.4Q15.6 7.5 15.1 8.6L13 13Q12.7 13.5 12 13.5Z" fill="url(#gf)" stroke="#c8872e" stroke-width="1" stroke-linejoin="round"/></svg><span class="t" style="left:79px;top:324px;letter-spacing:-0.881px;">TABLE</span><svg style="position:absolute;left:50px;top:351px" width="7" height="11" viewBox="0 0 7 11"><path d="M0.5 0L6.5 5.5L0.5 11Z" fill="#3a3a3a"/></svg><svg style="position:absolute;left:61px;top:349px" width="16" height="16" viewBox="0 0 16 16"><path d="M1.5 13V4.6Q1.5 3.5 2.6 3.5H5.4Q6.3 3.5 6.8 4.3L7.3 5H10.5Q11.5 5 11.5 6V7.5" fill="#fadf9e" stroke="#c8872e" stroke-width="1"/><path d="M1.5 13.5L4.2 8.2Q4.6 7.5 5.4 7.5H14.4Q15.6 7.5 15.1 8.6L13 13Q12.7 13.5 12 13.5Z" fill="url(#gf)" stroke="#c8872e" stroke-width="1" stroke-linejoin="round"/></svg><span class="t" style="left:79px;top:347px;letter-spacing:-1.294px;">TYPE</span><svg style="position:absolute;left:50px;top:374px" width="7" height="11" viewBox="0 0 7 11"><path d="M0.5 0L6.5 5.5L0.5 11Z" fill="#3a3a3a"/></svg><svg style="position:absolute;left:61px;top:372px" width="16" height="16" viewBox="0 0 16 16"><path d="M1.5 13V4.6Q1.5 3.5 2.6 3.5H5.4Q6.3 3.5 6.8 4.3L7.3 5H10.5Q11.5 5 11.5 6V7.5" fill="#fadf9e" stroke="#c8872e" stroke-width="1"/><path d="M1.5 13.5L4.2 8.2Q4.6 7.5 5.4 7.5H14.4Q15.6 7.5 15.1 8.6L13 13Q12.7 13.5 12 13.5Z" fill="url(#gf)" stroke="#c8872e" stroke-width="1" stroke-linejoin="round"/></svg><span class="t" style="left:79px;top:370px;letter-spacing:-0.584px;">VIEW</span></div>
<div style="position:absolute;left:2px;top:444px;width:311px;height:2px;background:#e6e6e6;border-radius:0 0 5px 5px"></div>
<div style="position:absolute;left:2px;top:40px;width:159px;height:26px;background:#e6e6e6;border-right:1px solid #aeaeae;border-top-right-radius:5px;border-top-left-radius:5px;"></div>
<span class="t blk" style="left:26px;top:44px;letter-spacing:0.143px;">Project Explorer</span>
<svg style="position:absolute;left:143px;top:48px" width="11" height="11" viewBox="0 0 11 11"><path d="M2 0.8 L5.5 3.4 L9 0.8 L10.2 2 L7.6 5.5 L10.2 9 L9 10.2 L5.5 7.6 L2 10.2 L0.8 9 L3.4 5.5 L0.8 2 Z" fill="#fff" stroke="#111" stroke-width="1.5" stroke-linejoin="round"/></svg>
<div style="position:absolute;left:213px;top:41px;width:58px;height:23px;background:#e3e3e3"></div><svg style="position:absolute;left:6px;top:45px" width="17" height="16" viewBox="0 0 17 16"><path d="M0.6 0.6H6L8.4 3V10.4H0.6Z" fill="#fdfdfd" stroke="#a89868" stroke-width="1"/><path d="M6 0.6V3H8.4" fill="#e8d8a0" stroke="#a89868" stroke-width="0.8"/><path d="M2 3.5H4.5M2 5.5H6.5M2 7.5H5" stroke="#5a82d8" stroke-width="1"/><path d="M4.6 14.4V7Q4.6 6 5.6 6H8.2Q8.8 6 9.2 6.6L9.8 7.4H14.6Q15.6 7.4 15.6 8.4V14.4Q15.6 15.4 14.6 15.4H5.6Q4.6 15.4 4.6 14.4Z" fill="url(#gfo)" stroke="#c07a1e" stroke-width="1"/></svg><svg style="position:absolute;left:216px;top:46px" width="14" height="13" viewBox="0 0 14 13"><rect x="0.5" y="0.5" width="9" height="9" fill="#eaf0fa" stroke="#b9c6de"/><rect x="2.5" y="2.5" width="10" height="10" fill="#fdfeff" stroke="#8ea5cf"/><path d="M4.5 7.5H10.5" stroke="#1f4f9f" stroke-width="1.4"/></svg><div style="position:absolute;left:232px;top:44px;width:17px;height:17px;border:1px solid #bdbdbd;border-radius:3px;background:#d0d0d0"></div><svg style="position:absolute;left:232px;top:44px" width="17" height="17" viewBox="0 0 17 17"><path d="M6.5 1L1.2 4.6L6.5 8.2V6.2H11.5V3H6.5Z" fill="#fff3c4" stroke="#c9921a" stroke-width="1" stroke-linejoin="round"/><path d="M10.5 8.4L15.8 12L10.5 15.6V13.6H5V10.4H10.5Z" fill="#fff3c4" stroke="#c9921a" stroke-width="1" stroke-linejoin="round"/></svg><svg style="position:absolute;left:256px;top:47px" width="11" height="7" viewBox="0 0 11 7"><path d="M0.7 0.5H10.3L5.5 5.8Z" fill="#fff" stroke="#555" stroke-width="1"/></svg><svg style="position:absolute;left:274px;top:48px" width="10" height="4" viewBox="0 0 10 4"><rect x="0.5" y="0.5" width="9" height="3" fill="#fff" stroke="#555"/></svg><svg style="position:absolute;left:292px;top:48px" width="10" height="10" viewBox="0 0 10 10"><rect x="0.5" y="0.5" width="9" height="9" fill="#fff" stroke="#555"/><rect x="0.5" y="0.5" width="9" height="1.6" fill="#555"/></svg>
<div style="position:absolute;left:1px;top:451px;width:313px;height:283px;border:1px solid #aeaeae;border-radius:6px;background:#e6e6e6"></div>
<div style="position:absolute;left:2px;top:452px;width:90px;height:26px;background:#dddddd;border-radius:5px 0 0 0;border-bottom:1px solid #aeaeae"></div>
<div style="position:absolute;left:254px;top:452px;width:59px;height:26px;background:#dddddd;border-radius:0 5px 0 0;border-bottom:1px solid #aeaeae"></div>
<div style="position:absolute;left:4px;top:503px;width:307px;height:228px;background:#fff;overflow:hidden"><svg style="position:absolute;left:-4px;top:-503px" width="320" height="760" viewBox="0 0 320 760"><g stroke-width="1"><path d="M150.0 620.0L197.0 543.7" fill="none" stroke="#b6b6b6"/><path d="M201.5 536.5L200.1 545.6L194.0 541.8Z" fill="#c2c2c2" stroke="none"/><path d="M245.0 597.0L219.7 544.2" fill="none" stroke="#b6b6b6"/><path d="M216.0 536.5L222.9 542.6L216.4 545.7Z" fill="#c2c2c2" stroke="none"/><path d="M184.0 622.5L198.1 620.4" fill="none" stroke="#b6b6b6"/><path d="M206.5 619.2L198.6 624.0L197.6 616.9Z" fill="#c2c2c2" stroke="none"/><path d="M117.5 643.5L75.6 663.8" fill="none" stroke="#b6b6b6"/><path d="M68.0 667.5L74.1 660.6L77.2 667.0Z" fill="#c2c2c2" stroke="none"/></g></svg><div style="position:absolute;left:179px;top:10px;width:53px;height:23px;border:1px solid #b6becd;border-bottom-color:#a2abbd;border-radius:4px;background:linear-gradient(#dce7f6,#b2bed2);"></div><span class="t" style="left:186.0px;top:11.5px;letter-spacing:-0.032px;color:#17508f;">public</span><div style="position:absolute;left:202px;top:93px;width:89px;height:25px;border:2px solid #0000e0;border-radius:5px;background:linear-gradient(#ffff20,#e6e600);"></div><span class="t" style="left:210.0px;top:95.5px;letter-spacing:-0.400px;color:#111;">TBL tab123</span><div style="position:absolute;left:98px;top:117px;width:82px;height:23px;border:1px solid #b6becd;border-bottom-color:#a2abbd;border-radius:4px;background:linear-gradient(#dce7f6,#b2bed2);"></div><span class="t" style="left:104.5px;top:118.5px;letter-spacing:-0.670px;color:#17508f;">VIEW v123</span><div style="position:absolute;left:19px;top:162px;width:46px;height:23px;border:1px solid #b6becd;border-bottom-color:#a2abbd;border-radius:4px;background:linear-gradient(#dce7f6,#b2bed2);"></div><span class="t" style="left:26.0px;top:163.5px;letter-spacing:-0.658px;color:#17508f;">TBL t</span></div>
<div style="position:absolute;left:91px;top:451px;width:164px;height:27px;background:#e6e6e6;border-right:1px solid #aeaeae;border-top-right-radius:5px;border-top:1px solid #aeaeae;border-left:1px solid #aeaeae;border-top-left-radius:5px;"></div>
<svg style="position:absolute;left:8px;top:460px" width="16" height="15" viewBox="0 0 16 15"><rect x="0.5" y="1.5" width="12" height="7" fill="#eef2f8" stroke="#8a9ab8" stroke-width="0.9"/><rect x="1" y="3" width="7" height="3" fill="#4aa64a"/><circle cx="11" cy="10" r="4.2" fill="#2f9a38" stroke="#1d6f22" stroke-width="0.8"/><path d="M9.6 7.6L13.4 10L9.6 12.4Z" fill="#fff"/></svg>
<span class="t" style="left:26px;top:456px;letter-spacing:-0.128px;">Progress</span>
<svg style="position:absolute;left:97px;top:459px" width="13" height="13" viewBox="0 0 13 13"><rect x="0.5" y="0.5" width="11.5" height="11.5" fill="#f2f8ff" stroke="#8f8468"/><rect x="1" y="1" width="10.5" height="2.5" fill="#5a9ae0"/></svg>
<span class="t blk" style="left:115px;top:456px;letter-spacing:-0.250px;">pg Dependencies</span>
<svg style="position:absolute;left:236px;top:460px" width="11" height="11" viewBox="0 0 11 11"><path d="M2 0.8 L5.5 3.4 L9 0.8 L10.2 2 L7.6 5.5 L10.2 9 L9 10.2 L5.5 7.6 L2 10.2 L0.8 9 L3.4 5.5 L0.8 2 Z" fill="#fff" stroke="#111" stroke-width="1.5" stroke-linejoin="round"/></svg>
<svg style="position:absolute;left:274px;top:460px" width="10" height="4" viewBox="0 0 10 4"><rect x="0.5" y="0.5" width="9" height="3" fill="#fff" stroke="#555"/></svg><svg style="position:absolute;left:292px;top:460px" width="10" height="10" viewBox="0 0 10 10"><rect x="0.5" y="0.5" width="9" height="9" fill="#fff" stroke="#555"/><rect x="0.5" y="0.5" width="9" height="1.6" fill="#555"/></svg>
<div style="position:absolute;left:71px;top:483px;width:16px;height:16px;background:#fff"></div><svg style="position:absolute;left:71px;top:483px" width="16" height="16" viewBox="0 0 16 16"><path d="M3.5 3L11 4L13 11L5 13.5L11 4" fill="none" stroke="#333" stroke-width="0.9"/><circle cx="3.5" cy="3" r="1.7" fill="#fff" stroke="#7cb82f"/><circle cx="11" cy="4" r="1.7" fill="#fff" stroke="#7cb82f"/><circle cx="13" cy="11" r="1.7" fill="#fff" stroke="#7cb82f"/><circle cx="5" cy="13.5" r="1.7" fill="#fff" stroke="#7cb82f"/></svg><span class="t" style="left:90px;top:482px;letter-spacing:-0.098px;">Add depcy</span><div style="position:absolute;left:163px;top:483px;width:68px;height:17px;border:1px solid #b4b4b4;border-radius:4px;background:#d8d8d8;box-shadow:inset 0 1px 1px #c8c8c8"></div><svg style="position:absolute;left:164px;top:484px" width="15" height="15" viewBox="0 0 15 15"><defs><radialGradient id="gb" cx="0.4" cy="0.25" r="0.85"><stop offset="0" stop-color="#9ad8fc"/><stop offset="1" stop-color="#2f80dc"/></radialGradient></defs><circle cx="7.5" cy="7.5" r="6.6" fill="url(#gb)"/></svg><span class="t" style="left:182px;top:482px;letter-spacing:0.331px;">Project</span><svg style="position:absolute;left:233px;top:483px" width="16" height="16" viewBox="0 0 16 16"><defs><linearGradient id="gg" x1="0" y1="0" x2="0" y2="1"><stop offset="0" stop-color="#8af892"/><stop offset="0.58" stop-color="#72e27c"/><stop offset="0.62" stop-color="#50b85c"/><stop offset="0.8" stop-color="#58c464"/><stop offset="1" stop-color="#74dc7c"/></linearGradient></defs><circle cx="8" cy="8" r="6.9" fill="url(#gg)"/></svg><span class="t" style="left:252px;top:482px;letter-spacing:0.080px;">Remote</span>
<div style="position:absolute;left:318px;top:39px;width:834px;height:695px;border:1px solid #9f9f9f;border-radius:6px;background:#efefef"></div>
<div style="position:absolute;left:319px;top:65px;width:832px;height:1px;background:#999"></div>
<div style="position:absolute;left:319px;top:66px;width:832px;height:667px;background:#fff;border-radius:0 0 5px 5px;overflow:hidden"><div style="position:absolute;left:2px;top:2px;width:12px;height:663px;background:#f7f7f7"></div><div style="position:absolute;left:817px;top:2px;width:13px;height:663px;background:#f8f8f8"></div><div style="position:absolute;left:30px;top:2px;width:1px;height:663px;background:#f3f3f3"></div><div style="position:absolute;left:33px;top:206px;width:784px;height:17px;background:#e8f2fe"></div><div style="position:absolute;left:-319px;top:-66px;width:1136px;height:800px;overflow:hidden"><div class="ln" style="top:68px">1</div>
<div class="code" style="top:68px"><span class="k">SET</span><span class="w">·</span><span class="nv">TIMEZONE</span><span class="w">·</span><span class="k">TO</span><span class="w">·</span><span class="s">'UTC'</span>;<span class="w">¶</span></div>
<div class="ln" style="top:85px">2</div>
<div class="code" style="top:85px"><span class="w">¶</span></div>
<div class="ln" style="top:102px">3</div>
<div class="code" style="top:102px"><span class="k">SET</span><span class="w">·</span>check_function_bodies<span class="w">·</span>=<span class="w">·</span><span class="k">false</span>;<span class="w">¶</span></div>
<div class="ln" style="top:119px">4</div>
<div class="code" style="top:119px"><span class="w">¶</span></div>
<div class="ln" style="top:136px">5</div>
<div class="code" style="top:136px"><span class="k">START</span><span class="w">·</span><span class="k">TRANSACTION</span>;<span class="w">¶</span></div>
<div class="ln" style="top:153px">6</div>
<div class="code" style="top:153px"><span class="w">¶</span></div>
<div class="ln" style="top:170px">7</div>
<div class="code" style="top:170px"><span class="k">SET</span><span class="w">·</span>search_path<span class="w">·</span>=<span class="w">·</span>pg_catalog;<span class="w">¶</span></div>
<div class="ln" style="top:187px">8</div>
<div class="code" style="top:187px"><span class="w">¶</span></div>
<div class="ln" style="top:204px">9</div>
<div class="code" style="top:204px"><span class="k">DROP</span><span class="w">·</span><span class="k">VIEW</span><span class="w">·</span>public.v132;<span class="w">¶</span></div>
<div class="ln" style="top:221px">10</div>
<div class="code" style="top:221px"><span class="w">¶</span></div>
<div class="ln" style="top:238px">11</div>
<div class="code" style="top:238px"><span class="c">--</span><span class="wc">·</span><span class="c">DEPCY:</span><span class="wc">·</span><span class="c">This</span><span class="wc">·</span><span class="c">FUNCTION</span><span class="wc">·</span><span class="c">depends</span><span class="wc">·</span><span class="c">on</span><span class="wc">·</span><span class="c">the</span><span class="wc">·</span><span class="c">COLUMN:</span><span class="wc">·</span><span class="c">public.t1.c3</span><span class="w">¶</span></div>
<div class="ln" style="top:255px">12</div>
<div class="code" style="top:255px"><span class="w">¶</span></div>
<div class="ln" style="top:272px">13</div>
<div class="code" style="top:272px"><span class="k">DROP</span><span class="w">·</span><span class="k">FUNCTION</span><span class="w">·</span>public.ttg();<span class="w">¶</span></div>
<div class="ln" style="top:289px">14</div>
<div class="code" style="top:289px"><span class="w">¶</span></div>
<div class="ln" style="top:306px">15</div>
<div class="code" style="top:306px"><span class="k">ALTER</span><span class="w">·</span><span class="k">TABLE</span><span class="w">·</span><span class="k">ONLY</span><span class="w">·</span>public.<span class="hl">t1</span><span class="w">¶</span></div>
<div class="ln" style="top:323px">16</div>
<div class="code" style="top:323px"><span class="w">»   </span><span class="k">DROP</span><span class="w">·</span><span class="k">COLUMN</span><span class="w">·</span>c3;<span class="w">¶</span></div>
<div class="ln" style="top:340px">17</div>
<div class="code" style="top:340px"><span class="w">¶</span></div>
<div class="ln" style="top:357px">18</div>
<div class="code" style="top:357px"><span class="k">ALTER</span><span class="w">·</span><span class="k">TABLE</span><span class="w">·</span><span class="k">ONLY</span><span class="w">·</span>public.<span class="hl">t1</span><span class="w">¶</span></div>
<div class="ln" style="top:374px">19</div>
<div class="code" style="top:374px"><span class="w">»   </span><span class="k">DROP</span><span class="w">·</span><span class="k">COLUMN</span><span class="w">·</span>c4;<span class="w">¶</span></div>
<div class="ln" style="top:391px">20</div>
<div class="code" style="top:391px"><span class="w">¶</span></div>
<div class="ln" style="top:408px">21</div>
<div class="code" style="top:408px"><span class="k">CREATE</span><span class="w">·</span><span class="k">TABLE</span><span class="w">·</span>public.t<span class="w">·</span>(<span class="w">¶</span></div>
<div class="ln" style="top:425px">22</div>
<div class="code" style="top:425px"><span class="w">»   </span>id<span class="w">·</span><span class="ty">integer</span>,<span class="w">¶</span></div>
<div class="ln" style="top:442px">23</div>
<div class="code" style="top:442px"><span class="w">»   </span>ftext<span class="w">·</span><span class="ty">numeric</span>(18,2)<span class="w">¶</span></div>
<div class="ln" style="top:459px">24</div>
<div class="code" style="top:459px">);<span class="w">¶</span></div>
<div class="ln" style="top:476px">25</div>
<div class="code" style="top:476px"><span class="w">¶</span></div>
<div class="ln" style="top:493px">26</div>
<div class="code" style="top:493px"><span class="c">--</span><span class="wc">·</span><span class="c">DEPCY:</span><span class="wc">·</span><span class="c">This</span><span class="wc">·</span><span class="c">PROCEDURE</span><span class="wc">·</span><span class="c">depends</span><span class="wc">·</span><span class="c">on</span><span class="wc">·</span><span class="c">the</span><span class="wc">·</span><span class="c">COLUMN:</span><span class="wc">·</span><span class="c">public.t1.c2</span><span class="w">¶</span></div>
<div class="ln" style="top:510px">27</div>
<div class="code" style="top:510px"><span class="w">¶</span></div>
<div class="ln" style="top:527px">28</div>
<div class="code" style="top:527px"><span class="k">DROP</span><span class="w">·</span><span class="k">PROCEDURE</span><span class="w">·</span>public.insert_data(a<span class="w">·</span><span class="ty">integer</span>,<span class="w">·</span>b<span class="w">·</span><span class="ty">integer</span>);<span class="w">¶</span></div>
<div class="ln" style="top:544px">29</div>
<div class="code" style="top:544px"><span class="w">¶</span></div>
<div class="ln" style="top:561px">30</div>
<div class="code" style="top:561px"><span class="c">--</span><span class="wc">·</span><span class="c">DEPCY:</span><span class="wc">·</span><span class="c">This</span><span class="wc">·</span><span class="c">FUNCTION</span><span class="wc">·</span><span class="c">depends</span><span class="wc">·</span><span class="c">on</span><span class="wc">·</span><span class="c">the</span><span class="wc">·</span><span class="c">COLUMN:</span><span class="wc">·</span><span class="c">public.t1.c2</span><span class="w">¶</span></div>
<div class="ln" style="top:578px">31</div>
<div class="code" style="top:578px"><span class="w">¶</span></div>
<div class="ln" style="top:595px">32</div>
<div class="code" style="top:595px"><span class="k">DROP</span><span class="w">·</span><span class="k">FUNCTION</span><span class="w">·</span>public.taaac();<span class="w">¶</span></div>
<div class="ln" style="top:612px">33</div>
<div class="code" style="top:612px"><span class="w">¶</span></div>
<div class="ln" style="top:629px">34</div>
<div class="code" style="top:629px"><span class="k">ALTER</span><span class="w">·</span><span class="k">TABLE</span><span class="w">·</span>public.<span class="hl">t1</span><span class="w">¶</span></div>
<div class="ln" style="top:646px">35</div>
<div class="code" style="top:646px"><span class="w">»   </span><span class="k">ALTER</span><span class="w">·</span><span class="k">COLUMN</span><span class="w">·</span>c2<span class="w">·</span><span class="k">TYPE</span><span class="w">·</span><span class="k">text</span><span class="w">·</span><span class="k">USING</span><span class="w">·</span>c2::<span class="k">text</span>;<span class="w">·</span><span class="mc">/*</span><span class="wm">·</span><span class="mc">TYPE</span><span class="wm">·</span><span class="mc">change</span><span class="wm">·</span><span class="mc">-</span><span class="wm">·</span><span class="mc">table:</span><span class="wm">·</span><span class="mc">public.t1</span><span class="wm">·</span><span class="mc">original:</span><span class="wm">·</span><span class="mc">integer</span><span class="wm">·</span></div>
<div class="ln" style="top:663px">36</div>
<div class="code" style="top:663px"><span class="w">¶</span></div>
<div class="ln" style="top:680px">37</div>
<div class="code" style="top:680px"><span class="k">CREATE</span><span class="w">·</span><span class="k">OR</span><span class="w">·</span><span class="k">REPLACE</span><span class="w">·</span><span class="k">FUNCTION</span><span class="w">·</span>public.serv()<span class="w">·</span><span class="k">RETURNS</span><span class="w">·</span><span class="ty">void</span><span class="w">¶</span></div>
<div class="ln" style="top:697px">38</div>
<div class="code" style="top:697px"><span class="w">····</span><span class="k">LANGUAGE</span><span class="w">·</span>plpgsql<span class="w">·</span><span class="k">SECURITY</span><span class="w">·</span><span class="k">DEFINER</span><span class="w">¶</span></div>
<div class="ln" style="top:714px">39</div>
<div class="code" style="top:714px"><span class="w">····</span><span class="k">AS</span><span class="w">·</span>$$<span class="w">¶</span></div><svg style="position:absolute;left:322px;top:308px" width="10" height="11" viewBox="0 0 10 11"><path d="M5 0.8Q6 0.8 6.6 2L9.3 8Q9.9 10.3 8 10.3H2Q0.1 10.3 0.7 8L3.4 2Q4 0.8 5 0.8Z" fill="#fde7a0" stroke="#dfa040" stroke-width="1" stroke-linejoin="round"/><path d="M5 3.3V6" stroke="#4a2a10" stroke-width="1.5" stroke-linecap="round"/><rect x="4.2" y="7.4" width="1.6" height="1.5" fill="#9a6a30"/></svg><svg style="position:absolute;left:322px;top:359px" width="10" height="11" viewBox="0 0 10 11"><path d="M5 0.8Q6 0.8 6.6 2L9.3 8Q9.9 10.3 8 10.3H2Q0.1 10.3 0.7 8L3.4 2Q4 0.8 5 0.8Z" fill="#fde7a0" stroke="#dfa040" stroke-width="1" stroke-linejoin="round"/><path d="M5 3.3V6" stroke="#4a2a10" stroke-width="1.5" stroke-linecap="round"/><rect x="4.2" y="7.4" width="1.6" height="1.5" fill="#9a6a30"/></svg><svg style="position:absolute;left:322px;top:631px" width="10" height="11" viewBox="0 0 10 11"><path d="M5 0.8Q6 0.8 6.6 2L9.3 8Q9.9 10.3 8 10.3H2Q0.1 10.3 0.7 8L3.4 2Q4 0.8 5 0.8Z" fill="#fde7a0" stroke="#dfa040" stroke-width="1" stroke-linejoin="round"/><path d="M5 3.3V6" stroke="#4a2a10" stroke-width="1.5" stroke-linecap="round"/><rect x="4.2" y="7.4" width="1.6" height="1.5" fill="#9a6a30"/></svg></div><div style="position:absolute;left:819px;top:145px;width:9px;height:5px;border:1px solid #f5a69a;background:#fde6e2"></div><div style="position:absolute;left:819px;top:176px;width:9px;height:5px;border:1px solid #f5a69a;background:#fde6e2"></div><div style="position:absolute;left:819px;top:351px;width:9px;height:5px;border:1px solid #f5a69a;background:#fde6e2"></div></div>
<div style="position:absolute;left:540px;top:39px;width:384px;height:27px;background:#fff;border-right:1px solid #9f9f9f;border-top-right-radius:5px;border-top:1px solid #9f9f9f;border-left:1px solid #9f9f9f;border-top-left-radius:5px;"></div>
<svg style="position:absolute;left:323px;top:45px" width="17" height="16" viewBox="0 0 17 16"><path d="M2.4 3L7.5 0.4L13.8 0.7L13.4 9.7C12.5 12.5 9.5 14.5 7.9 15.6C6.3 14.5 3.2 12.5 2.4 9.7Z" fill="#3b4670" stroke="#59648a" stroke-width="0.5"/><path d="M5.6 4.2C6.6 1.8 9 1 13.2 1.2L13 7L10.8 7.6L10 5.4L8.4 7.2L7.2 4.8Z" fill="#a6e2f0"/><path d="M0.2 10.2C4 8.5 12 8.5 15.8 10.2L15.2 11.2L15.8 12.4C12 10.8 4 10.8 0.2 12.4L0.8 11.2Z" fill="#d4622c"/><path d="M7.2 12.2H8.8V13.8H7.2Z" fill="#dfe6f2"/></svg>
<span class="t" style="left:343px;top:44px;letter-spacing:0.106px;">test project - postgres_12</span>
<svg style="position:absolute;left:547px;top:46px" width="11" height="14" viewBox="0 0 11 14"><path d="M0.5 0.5H7L10.5 4V13.5H0.5Z" fill="#fcfdff" stroke="#8794ad"/><path d="M7 0.5V4H10.5Z" fill="#f3e6b4" stroke="#b9a97a" stroke-width="0.8" stroke-linejoin="round"/><path d="M2.5 3.5H5.5M2.5 5.5H8.5M2.5 7.5H8.5M2.5 9.5H8.5M2.5 11.5H6.5" stroke="#5878b8" stroke-width="1"/></svg>
<span class="t blk" style="left:564px;top:44px;letter-spacing:-0.026px;">2020-01-27 14'28'16 migration for postgres_12.sql</span>
<svg style="position:absolute;left:905px;top:48px" width="11" height="11" viewBox="0 0 11 11"><path d="M2 0.8 L5.5 3.4 L9 0.8 L10.2 2 L7.6 5.5 L10.2 9 L9 10.2 L5.5 7.6 L2 10.2 L0.8 9 L3.4 5.5 L0.8 2 Z" fill="#fff" stroke="#111" stroke-width="1.5" stroke-linejoin="round"/></svg>
<svg style="position:absolute;left:1112px;top:48px" width="10" height="4" viewBox="0 0 10 4"><rect x="0.5" y="0.5" width="9" height="3" fill="#fff" stroke="#555"/></svg><svg style="position:absolute;left:1130px;top:48px" width="10" height="10" viewBox="0 0 10 10"><rect x="0.5" y="0.5" width="9" height="9" fill="#fff" stroke="#555"/><rect x="0.5" y="0.5" width="9" height="1.6" fill="#555"/></svg>
<div style="position:absolute;left:1156px;top:39px;width:219px;height:695px;border:1px solid #aeaeae;border-radius:6px;background:#dddddd"></div>
<div style="position:absolute;left:1157px;top:65px;width:217px;height:1px;background:#aeaeae"></div>
<div style="position:absolute;left:1157px;top:66px;width:217px;height:2px;background:linear-gradient(#e6e6e6,#ececec)"></div>
<div style="position:absolute;left:1159px;top:68px;width:213px;height:663px;background:#fff;overflow:hidden"></div>
<div style="position:absolute;left:1157px;top:731px;width:217px;height:2px;background:#e6e6e6;border-radius:0 0 5px 5px"></div>
<div style="position:absolute;left:1157px;top:40px;width:98px;height:26px;background:#e6e6e6;border-right:1px solid #aeaeae;border-top-right-radius:5px;border-top-left-radius:5px;"></div>
<svg style="position:absolute;left:1162px;top:46px" width="16" height="16" viewBox="0 0 16 16"><rect x="0.5" y="0.5" width="5" height="5" fill="#fff" stroke="#2f78d0"/><rect x="0.5" y="9.5" width="5" height="5" fill="#fff" stroke="#2f78d0"/><rect x="9" y="5" width="3" height="3" fill="#2f78d0"/><path d="M8 3.5H15M13 6.5H15M8 9.5H15" stroke="#6f8fc0" stroke-width="1"/></svg>
<span class="t blk" style="left:1181px;top:44px;letter-spacing:0.210px;">Outline</span>
<svg style="position:absolute;left:1237px;top:48px" width="11" height="11" viewBox="0 0 11 11"><path d="M2 0.8 L5.5 3.4 L9 0.8 L10.2 2 L7.6 5.5 L10.2 9 L9 10.2 L5.5 7.6 L2 10.2 L0.8 9 L3.4 5.5 L0.8 2 Z" fill="#fff" stroke="#111" stroke-width="1.5" stroke-linejoin="round"/></svg>
<svg style="position:absolute;left:1295px;top:44px" width="20" height="18" viewBox="0 0 20 18"><path d="M3.5 3V15M1.2 12.5L3.5 15.5L5.8 12.5" fill="none" stroke="#555" stroke-width="1.1"/><text x="5.6" y="8.6" font-family="Liberation Serif,serif" font-weight="bold" font-size="12.5" fill="#1f7a5a">a</text><text x="10.4" y="16.4" font-family="Liberation Serif,serif" font-weight="bold" font-size="12.5" fill="#8a1f9a">z</text></svg><svg style="position:absolute;left:1316px;top:46px" width="13" height="13" viewBox="0 0 13 13"><path d="M6.5 0.7L12.3 6.5L6.5 12.3L0.7 6.5Z" fill="#fbd980" stroke="#d79a20" stroke-width="1"/><path d="M6.5 3.2V7" stroke="#222" stroke-width="1.4"/><rect x="5.8" y="8.2" width="1.4" height="1.4" fill="#222"/></svg><svg style="position:absolute;left:1335px;top:48px" width="10" height="4" viewBox="0 0 10 4"><rect x="0.5" y="0.5" width="9" height="3" fill="#fff" stroke="#555"/></svg><svg style="position:absolute;left:1353px;top:48px" width="10" height="10" viewBox="0 0 10 10"><rect x="0.5" y="0.5" width="9" height="9" fill="#fff" stroke="#555"/><rect x="0.5" y="0.5" width="9" height="1.6" fill="#555"/></svg>
<svg style="position:absolute;left:1176px;top:72px" width="14" height="14" viewBox="0 0 14 14"><rect x="1" y="1" width="12" height="12" rx="0.8" fill="#fff" stroke="#9bcf14" stroke-width="2"/><rect x="3.5" y="3.5" width="7" height="7" fill="url(#gv)" stroke="#93c81a" stroke-width="1"/></svg><span class="t" style="left:1193px;top:70px;letter-spacing:-0.862px;">DROP v132</span><svg style="position:absolute;left:1176px;top:95px" width="15" height="14" viewBox="0 0 15 14"><path d="M7 0.7L13.6 6.5L7 12.3L4.8 10.4L6 9.4H1.9Q0.5 9.4 0.5 8V5Q0.5 3.6 1.9 3.6H6L4.8 2.6Z" fill="url(#gb2)" stroke="#3558d0" stroke-width="1" stroke-linejoin="round"/><path d="M1.8 5H8L6.4 3L7 2.3L11.6 6.3" fill="none" stroke="#fff" stroke-opacity="0.6" stroke-width="1"/></svg><span class="t" style="left:1193px;top:93px;letter-spacing:-0.239px;">DROP ttg</span><svg style="position:absolute;left:1176px;top:117px" width="15" height="16" viewBox="0 0 15 16"><rect x="0.5" y="0.5" width="13" height="15" fill="#e4e4e4" stroke="#2a8ff0" stroke-width="1"/><rect x="1" y="1" width="12" height="3.6" fill="url(#gt)"/><path d="M2.5 7.5H6M8 7.5H11.5M2.5 10.5H6M8 10.5H11.5M2.5 13.5H6M8 13.5H11.5" stroke="#fbfbfb" stroke-width="1"/><path d="M2.5 6.5H6M8 6.5H11.5M2.5 9.5H6M8 9.5H11.5M2.5 12.5H6M8 12.5H11.5" stroke="#c4c4c4" stroke-width="1"/><path d="M6.5 6V14.5" stroke="#cfcfcf" stroke-width="1"/></svg><span class="t" style="left:1193px;top:116px;letter-spacing:-0.989px;">ALTER t1</span><svg style="position:absolute;left:1176px;top:140px" width="15" height="16" viewBox="0 0 15 16"><rect x="0.5" y="0.5" width="13" height="15" fill="#e4e4e4" stroke="#2a8ff0" stroke-width="1"/><rect x="1" y="1" width="12" height="3.6" fill="url(#gt)"/><path d="M2.5 7.5H6M8 7.5H11.5M2.5 10.5H6M8 10.5H11.5M2.5 13.5H6M8 13.5H11.5" stroke="#fbfbfb" stroke-width="1"/><path d="M2.5 6.5H6M8 6.5H11.5M2.5 9.5H6M8 9.5H11.5M2.5 12.5H6M8 12.5H11.5" stroke="#c4c4c4" stroke-width="1"/><path d="M6.5 6V14.5" stroke="#cfcfcf" stroke-width="1"/></svg><span class="t" style="left:1193px;top:139px;letter-spacing:-0.989px;">ALTER t1</span><svg style="position:absolute;left:1176px;top:163px" width="15" height="16" viewBox="0 0 15 16"><rect x="0.5" y="0.5" width="13" height="15" fill="#e4e4e4" stroke="#2a8ff0" stroke-width="1"/><rect x="1" y="1" width="12" height="3.6" fill="url(#gt)"/><path d="M2.5 7.5H6M8 7.5H11.5M2.5 10.5H6M8 10.5H11.5M2.5 13.5H6M8 13.5H11.5" stroke="#fbfbfb" stroke-width="1"/><path d="M2.5 6.5H6M8 6.5H11.5M2.5 9.5H6M8 9.5H11.5M2.5 12.5H6M8 12.5H11.5" stroke="#c4c4c4" stroke-width="1"/><path d="M6.5 6V14.5" stroke="#cfcfcf" stroke-width="1"/></svg><span class="t" style="left:1193px;top:162px;letter-spacing:-1.071px;">CREATE t</span><svg style="position:absolute;left:1176px;top:187px" width="15" height="14" viewBox="0 0 15 14"><path d="M7 0.7L13.6 6.5L7 12.3L4.8 10.4L6 9.4H1.9Q0.5 9.4 0.5 8V5Q0.5 3.6 1.9 3.6H6L4.8 2.6Z" fill="url(#gr)" stroke="#c23a3a" stroke-width="1" stroke-linejoin="round"/><path d="M1.8 5H8L6.4 3L7 2.3L11.6 6.3" fill="none" stroke="#fff" stroke-opacity="0.6" stroke-width="1"/></svg><span class="t" style="left:1193px;top:185px;letter-spacing:-0.216px;">DROP insert_data</span><svg style="position:absolute;left:1176px;top:210px" width="15" height="14" viewBox="0 0 15 14"><path d="M7 0.7L13.6 6.5L7 12.3L4.8 10.4L6 9.4H1.9Q0.5 9.4 0.5 8V5Q0.5 3.6 1.9 3.6H6L4.8 2.6Z" fill="url(#gb2)" stroke="#3558d0" stroke-width="1" stroke-linejoin="round"/><path d="M1.8 5H8L6.4 3L7 2.3L11.6 6.3" fill="none" stroke="#fff" stroke-opacity="0.6" stroke-width="1"/></svg><span class="t" style="left:1193px;top:208px;letter-spacing:-0.493px;">DROP taaac</span><svg style="position:absolute;left:1176px;top:232px" width="15" height="16" viewBox="0 0 15 16"><rect x="0.5" y="0.5" width="13" height="15" fill="#e4e4e4" stroke="#2a8ff0" stroke-width="1"/><rect x="1" y="1" width="12" height="3.6" fill="url(#gt)"/><path d="M2.5 7.5H6M8 7.5H11.5M2.5 10.5H6M8 10.5H11.5M2.5 13.5H6M8 13.5H11.5" stroke="#fbfbfb" stroke-width="1"/><path d="M2.5 6.5H6M8 6.5H11.5M2.5 9.5H6M8 9.5H11.5M2.5 12.5H6M8 12.5H11.5" stroke="#c4c4c4" stroke-width="1"/><path d="M6.5 6V14.5" stroke="#cfcfcf" stroke-width="1"/></svg><span class="t" style="left:1193px;top:231px;letter-spacing:-0.989px;">ALTER t1</span><svg style="position:absolute;left:1176px;top:256px" width="15" height="14" viewBox="0 0 15 14"><path d="M7 0.7L13.6 6.5L7 12.3L4.8 10.4L6 9.4H1.9Q0.5 9.4 0.5 8V5Q0.5 3.6 1.9 3.6H6L4.8 2.6Z" fill="url(#gb2)" stroke="#3558d0" stroke-width="1" stroke-linejoin="round"/><path d="M1.8 5H8L6.4 3L7 2.3L11.6 6.3" fill="none" stroke="#fff" stroke-opacity="0.6" stroke-width="1"/></svg><span class="t" style="left:1193px;top:254px;letter-spacing:-0.930px;">CREATE serv</span><svg style="position:absolute;left:1176px;top:278px" width="15" height="16" viewBox="0 0 15 16"><rect x="0.5" y="0.5" width="13" height="15" fill="#e4e4e4" stroke="#2a8ff0" stroke-width="1"/><rect x="1" y="1" width="12" height="3.6" fill="url(#gt)"/><path d="M2.5 7.5H6M8 7.5H11.5M2.5 10.5H6M8 10.5H11.5M2.5 13.5H6M8 13.5H11.5" stroke="#fbfbfb" stroke-width="1"/><path d="M2.5 6.5H6M8 6.5H11.5M2.5 9.5H6M8 9.5H11.5M2.5 12.5H6M8 12.5H11.5" stroke="#c4c4c4" stroke-width="1"/><path d="M6.5 6V14.5" stroke="#cfcfcf" stroke-width="1"/></svg><span class="t" style="left:1193px;top:277px;letter-spacing:-0.752px;">CREATE tab123</span><svg style="position:absolute;left:1176px;top:302px" width="14" height="14" viewBox="0 0 14 14"><rect x="1" y="1" width="12" height="12" rx="0.8" fill="#fff" stroke="#9bcf14" stroke-width="2"/><rect x="3.5" y="3.5" width="7" height="7" fill="url(#gv)" stroke="#93c81a" stroke-width="1"/></svg><span class="t" style="left:1193px;top:300px;letter-spacing:-1.129px;">CREATE v123</span>
<div style="position:absolute;left:1376px;top:39px;width:28px;height:89px;border:1px solid #b4b4b4;border-radius:2px 2px 9px 9px;background:#e3e3e3;box-shadow:inset 1px 1px 0 #fff,inset -1px 0 0 #fff"></div><div style="position:absolute;left:1376px;top:131px;width:28px;height:54px;border:1px solid #b4b4b4;border-radius:4px 4px 9px 9px;background:#e3e3e3;box-shadow:inset 1px 1px 0 #fff,inset -1px 0 0 #fff"></div><svg style="position:absolute;left:1384px;top:46px" width="14" height="2" viewBox="0 0 14 2"><rect x="0.0" y="0" width="1.6" height="1.6" fill="#9a9484"/><rect x="3.6" y="0" width="1.6" height="1.6" fill="#9a9484"/><rect x="7.2" y="0" width="1.6" height="1.6" fill="#9a9484"/><rect x="10.8" y="0" width="1.6" height="1.6" fill="#9a9484"/></svg><svg style="position:absolute;left:1384px;top:137px" width="14" height="2" viewBox="0 0 14 2"><rect x="0.0" y="0" width="1.6" height="1.6" fill="#9a9484"/><rect x="3.6" y="0" width="1.6" height="1.6" fill="#9a9484"/><rect x="7.2" y="0" width="1.6" height="1.6" fill="#9a9484"/><rect x="10.8" y="0" width="1.6" height="1.6" fill="#9a9484"/></svg><svg style="position:absolute;left:1386px;top:56px" width="9" height="9" viewBox="0 0 9 9"><rect x="2.5" y="0.8" width="5.6" height="4.6" fill="#f4f4f4" stroke="#635c52" stroke-width="1"/><path d="M2.5 1.3H8.1" stroke="#635c52" stroke-width="1.6"/><rect x="0.5" y="3.4" width="5.6" height="4.6" fill="#f4f4f4" stroke="#635c52" stroke-width="1"/><path d="M0.5 3.9H6.1" stroke="#635c52" stroke-width="1.6"/></svg><svg style="position:absolute;left:1382px;top:70px" width="18" height="17" viewBox="0 0 18 17"><g transform="translate(9,8.4) rotate(-42) scale(0.92)"><path d="M-10.4 -2.6Q-10.4 -3.5 -9.4 -3.5H-3.5V3.5H-9.4Q-10.4 3.5 -10.4 2.6Z" fill="url(#gpt)" stroke="#e2a228" stroke-width="0.8"/><path d="M1 -3.6H7.4L10.6 0L7.4 3.6H1Z" fill="url(#gpn)" stroke="#e8982a" stroke-width="0.9" stroke-linejoin="round"/><rect x="-4.2" y="-4" width="5.4" height="8" rx="1.8" fill="#cdc6d6" stroke="#9a7c4c" stroke-width="0.9"/><circle cx="5.6" cy="-0.6" r="1" fill="#2a50b0"/></g></svg><svg style="position:absolute;left:1382px;top:88px" width="15" height="16" viewBox="0 0 15 16"><path d="M0.5 0.5H12Q10 4 12 8Q14 12 12 15.5H0.5Z" fill="#e8f0fa" stroke="#4a7ac0" stroke-width="0.9"/><path d="M7 0.5V15.5M0.5 8H12" stroke="#7fa0d8" stroke-width="0.8"/><circle cx="5" cy="5" r="2.4" fill="#e02020"/><path d="M3 14L5 9.5L7 14Z" fill="#f0a020"/></svg><svg style="position:absolute;left:1381px;top:107px" width="17" height="16" viewBox="0 0 17 16"><path d="M6.5 0.5H10.5V4.5H13L8.5 9L4 4.5H6.5Z" fill="#3fb030" stroke="#1f7a18" stroke-width="0.9" stroke-linejoin="round"/><path d="M1 8.5V14.5H16V8.5H13V11.5H4V8.5Z" fill="#eaf0fa" stroke="#2f5fb0" stroke-width="1" stroke-linejoin="round"/></svg><svg style="position:absolute;left:1386px;top:146px" width="9" height="9" viewBox="0 0 9 9"><rect x="2.5" y="0.8" width="5.6" height="4.6" fill="#f4f4f4" stroke="#635c52" stroke-width="1"/><path d="M2.5 1.3H8.1" stroke="#635c52" stroke-width="1.6"/><rect x="0.5" y="3.4" width="5.6" height="4.6" fill="#f4f4f4" stroke="#635c52" stroke-width="1"/><path d="M0.5 3.9H6.1" stroke="#635c52" stroke-width="1.6"/></svg><svg style="position:absolute;left:1384px;top:162px" width="14" height="14" viewBox="0 0 14 14"><rect x="0.9" y="0.9" width="11.2" height="8.8" rx="1.2" fill="#f8fbff" stroke="#2a5cc0" stroke-width="1.8"/><path d="M3.2 3.8H8.6M3.2 6.2H9.8" stroke="#2a5cc0" stroke-width="1"/><path d="M4.4 10.4H8.6L9.2 12H11.4V13.2H1.6V12H3.8Z" fill="#2a5cc0"/></svg>
<svg style="position:absolute;left:358px;top:734px" width="2" height="23" viewBox="0 0 2 23"><path d="M0.5 0V23" stroke="#c8c8c8"/><path d="M1.5 0V23" stroke="#f0f0f0"/></svg><svg style="position:absolute;left:494px;top:734px" width="2" height="23" viewBox="0 0 2 23"><path d="M0.5 0V23" stroke="#c8c8c8"/><path d="M1.5 0V23" stroke="#f0f0f0"/></svg><svg style="position:absolute;left:621px;top:734px" width="2" height="23" viewBox="0 0 2 23"><path d="M0.5 0V23" stroke="#c8c8c8"/><path d="M1.5 0V23" stroke="#f0f0f0"/></svg><svg style="position:absolute;left:747px;top:734px" width="2" height="23" viewBox="0 0 2 23"><path d="M0.5 0V23" stroke="#c8c8c8"/><path d="M1.5 0V23" stroke="#f0f0f0"/></svg><span class="t" style="left:366px;top:735px;letter-spacing:0.470px;">Writable</span><span class="t" style="left:501px;top:735px;letter-spacing:0.110px;">Smart Insert</span><span class="t" style="left:629px;top:735px;letter-spacing:-0.646px;">13 : 28 : 223</span><span class="t" style="left:755px;top:735px;letter-spacing:-0.271px;">PostgreSQL</span><svg style="position:absolute;left:871px;top:739px" width="3" height="22" viewBox="0 0 3 22"><rect x="1" y="1.0" width="1.4" height="1.4" fill="#f4f4f4"/><rect x="0.2" y="0.2" width="1.7" height="1.7" fill="#aca695"/><rect x="1" y="5.4" width="1.4" height="1.4" fill="#f4f4f4"/><rect x="0.2" y="4.6" width="1.7" height="1.7" fill="#aca695"/><rect x="1" y="9.8" width="1.4" height="1.4" fill="#f4f4f4"/><rect x="0.2" y="9.0" width="1.7" height="1.7" fill="#aca695"/><rect x="1" y="14.2" width="1.4" height="1.4" fill="#f4f4f4"/><rect x="0.2" y="13.4" width="1.7" height="1.7" fill="#aca695"/></svg><div style="position:absolute;left:875px;top:736px;width:171px;height:21px;background:#f2f1f0;border-top:1px solid #c4c4c4;border-bottom:1px solid #fbfbfb;border-right:1px solid #fbfbfb"></div><div style="position:absolute;left:875px;top:736px;width:70px;height:21px;background:#a6a6a6"></div><div style="position:absolute;left:1028px;top:737px;width:1px;height:19px;background:#b4b4b4"></div><span class="t" style="left:906px;top:737px;letter-spacing:-0.380px;">370M</span><span class="t" style="left:947px;top:737px;letter-spacing:-0.171px;">of 820M</span><svg style="position:absolute;left:1031px;top:739px" width="13" height="16" viewBox="0 0 13 16"><path d="M0.6 2.6H12.4M4.4 2.6V1H8.6V2.6" fill="none" stroke="#4a6cb0" stroke-width="1.1"/><path d="M1.4 3.6L2.4 15H10.6L11.6 3.6Z" fill="#b4c8ec" stroke="#4a6cb0" stroke-width="1"/><path d="M4.4 5V13.6M6.5 5V13.6M8.6 5V13.6" stroke="#4a6cb0" stroke-width="0.9"/></svg><svg style="position:absolute;left:1047px;top:739px" width="3" height="22" viewBox="0 0 3 22"><rect x="1" y="1.0" width="1.4" height="1.4" fill="#f4f4f4"/><rect x="0.2" y="0.2" width="1.7" height="1.7" fill="#aca695"/><rect x="1" y="5.4" width="1.4" height="1.4" fill="#f4f4f4"/><rect x="0.2" y="4.6" width="1.7" height="1.7" fill="#aca695"/><rect x="1" y="9.8" width="1.4" height="1.4" fill="#f4f4f4"/><rect x="0.2" y="9.0" width="1.7" height="1.7" fill="#aca695"/><rect x="1" y="14.2" width="1.4" height="1.4" fill="#f4f4f4"/><rect x="0.2" y="13.4" width="1.7" height="1.7" fill="#aca695"/></svg>
</body></html>
